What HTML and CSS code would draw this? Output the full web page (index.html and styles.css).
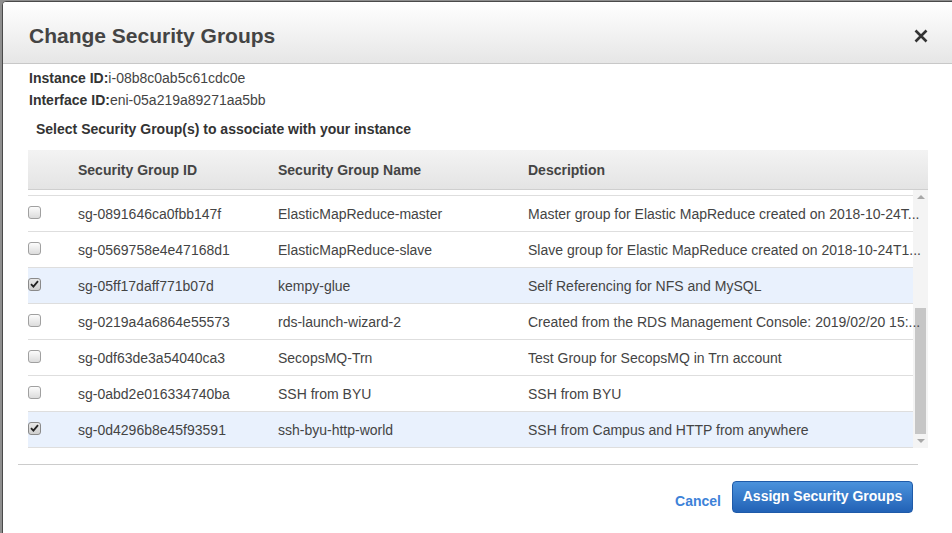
FILE: index.html
```html
<!DOCTYPE html>
<html>
<head>
<meta charset="utf-8">
<link rel="stylesheet" href="styles.css">
</head>
<body>
<div class="modal">
  <div class="modal-header">
    <h1 class="title">Change Security Groups</h1>
    <span class="close" aria-label="Close">
      <svg width="14" height="14" viewBox="0 0 14 14"><path d="M1.5 1.5 L12.5 12.5 M12.5 1.5 L1.5 12.5" stroke="#333" stroke-width="2.6" stroke-linecap="butt" fill="none"/></svg>
    </span>
  </div>
  <div class="modal-body">
    <div class="info"><b>Instance ID:</b>i-08b8c0ab5c61cdc0e</div>
    <div class="info"><b>Interface ID:</b>eni-05a219a89271aa5bb</div>
    <div class="select-label">Select Security Group(s) to associate with your instance</div>
    <div class="grid">
      <div class="thead">
        <div></div>
        <div>Security Group ID</div>
        <div>Security Group Name</div>
        <div>Description</div>
      </div>
      <div class="tbody">
        <div class="rows">
          <div class="row"><div><span class="cb"></span></div><div>sg-0891646ca0fbb147f</div><div>ElasticMapReduce-master</div><div class="desc">Master group for Elastic MapReduce created on 2018-10-24T...</div></div>
          <div class="row"><div><span class="cb"></span></div><div>sg-0569758e4e47168d1</div><div>ElasticMapReduce-slave</div><div class="desc">Slave group for Elastic MapReduce created on 2018-10-24T1...</div></div>
          <div class="row sel"><div><span class="cb on"><svg width="9" height="8" viewBox="0 0 9 8"><path d="M1 4.2 L3.4 6.6 L8 1.2" stroke="#222" stroke-width="1.8" fill="none"/></svg></span></div><div>sg-05ff17daff771b07d</div><div>kempy-glue</div><div class="desc">Self Referencing for NFS and MySQL</div></div>
          <div class="row"><div><span class="cb"></span></div><div>sg-0219a4a6864e55573</div><div>rds-launch-wizard-2</div><div class="desc">Created from the RDS Management Console: 2019/02/20 15:...</div></div>
          <div class="row"><div><span class="cb"></span></div><div>sg-0df63de3a54040ca3</div><div>SecopsMQ-Trn</div><div class="desc">Test Group for SecopsMQ in Trn account</div></div>
          <div class="row"><div><span class="cb"></span></div><div>sg-0abd2e016334740ba</div><div>SSH from BYU</div><div class="desc">SSH from BYU</div></div>
          <div class="row sel"><div><span class="cb on"><svg width="9" height="8" viewBox="0 0 9 8"><path d="M1 4.2 L3.4 6.6 L8 1.2" stroke="#222" stroke-width="1.8" fill="none"/></svg></span></div><div>sg-0d4296b8e45f93591</div><div>ssh-byu-http-world</div><div class="desc">SSH from Campus and HTTP from anywhere</div></div>
        </div>
        <div class="scrollbar">
          <span class="arrow up"></span>
          <div class="track"><div class="thumb"></div></div>
          <span class="arrow down"></span>
        </div>
      </div>
    </div>
  </div>
  <div class="modal-footer">
    <a class="cancel">Cancel</a>
    <button class="primary">Assign Security Groups</button>
  </div>
</div>
</body>
</html>
```
FILE: styles.css
```css
html, body {
  margin: 0;
  padding: 0;
  height: 100%;
  overflow: hidden;
}
body {
  background: #8e8e8e;
  font-family: "Liberation Sans", Arial, sans-serif;
  color: #444;
}
.modal {
  margin: 1px 0 0 2px;
  width: 960px;
  height: 540px;
  background: #fff;
  border: 1px solid #4a4a4a;
  border-radius: 4px 0 0 0;
  overflow: hidden;
}
.modal-header {
  box-sizing: border-box;
  height: 62px;
  width: 960px;
  border-bottom: 1px solid #c8c8c8;
  background: linear-gradient(#ffffff, #e6e6e6);
  display: flex;
  align-items: center;
  padding: 0 35px 0 26px;
  justify-content: space-between;
}
.title {
  margin: 0;
  font-size: 21px;
  font-weight: bold;
  color: #444;
  padding-top: 6px;
}
.close {
  display: flex;
  padding-top: 6px;
}
.modal-body {
  padding: 3px 0 0 25px;
}
.info {
  font-size: 14px;
  line-height: 22px;
  color: #444;
  padding-left: 1px;
}
.info b {
  color: #333;
}
.select-label {
  margin-top: 7px;
  font-size: 14px;
  line-height: 22px;
  font-weight: bold;
  color: #333;
  padding-left: 8px;
}
.grid {
  margin-top: 10px;
  width: 900px;
  font-size: 14px;
}
.thead, .row {
  display: grid;
  grid-template-columns: 50px 200px 250px 1fr;
  align-items: center;
}
.thead {
  height: 39px;
  border-bottom: 1px solid #cfcfcf;
  background: linear-gradient(#f3f3f3, #e4e4e4);
  font-weight: bold;
  color: #444;
}
.tbody {
  display: flex;
}
.rows {
  flex: 1;
  padding-top: 5px;
  min-width: 0;
  position: relative;
  z-index: 1;
}
.row {
  height: 35px;
  border-top: 1px solid #dedede;
  color: #444;
}
.row > div {
  padding-top: 1px;
}
.row:last-child {
  border-bottom: 1px solid #dedede;
}
.row.sel {
  background: #e9f1fd;
}
.desc {
  white-space: nowrap;
}
.cb {
  display: flex;
  align-items: center;
  justify-content: center;
  width: 11px;
  height: 11px;
  border: 1px solid #a0a0a0;
  border-radius: 3px;
  background: linear-gradient(#fcfcfc, #dcdcdc);
  margin-top: -4px;
}
.cb.on {
  background: linear-gradient(#e8e8e8, #cfcfcf);
  border-color: #8a8a8a;
}
.scrollbar {
  width: 15px;
  display: flex;
  flex-direction: column;
  background: #f4f4f4;
  height: 258px;
}
.arrow {
  height: 14px;
  display: flex;
  justify-content: center;
  align-items: center;
}
.arrow.up::before {
  content: "";
  border-left: 4px solid transparent;
  border-right: 4px solid transparent;
  border-bottom: 4px solid #a8a8a8;
}
.arrow.down::before {
  content: "";
  border-left: 4px solid transparent;
  border-right: 4px solid transparent;
  border-top: 4px solid #a8a8a8;
}
.track {
  flex: 1;
  display: flex;
  flex-direction: column;
  justify-content: flex-end;
  padding: 0 2px;
}
.thumb {
  height: 126px;
  background: #c6c6c6;
}
.modal-footer {
  margin: 16px 0 0 15px;
  width: 900px;
  border-top: 1px solid #cccccc;
  padding-top: 16px;
  display: flex;
  justify-content: flex-end;
  align-items: flex-start;
}
.cancel {
  font-size: 14px;
  font-weight: bold;
  color: #3d82d8;
  margin-top: 12px;
  margin-right: 11px;
  cursor: pointer;
}
.primary {
  height: 32px;
  width: 181px;
  margin-right: 5px;
  border: 1px solid #1f5ba9;
  border-radius: 4px;
  background: linear-gradient(#4b92dc, #2262b6);
  color: #fff;
  font-family: "Liberation Sans", Arial, sans-serif;
  font-size: 14px;
  font-weight: bold;
  padding: 0 0 3px 0;
}
```
